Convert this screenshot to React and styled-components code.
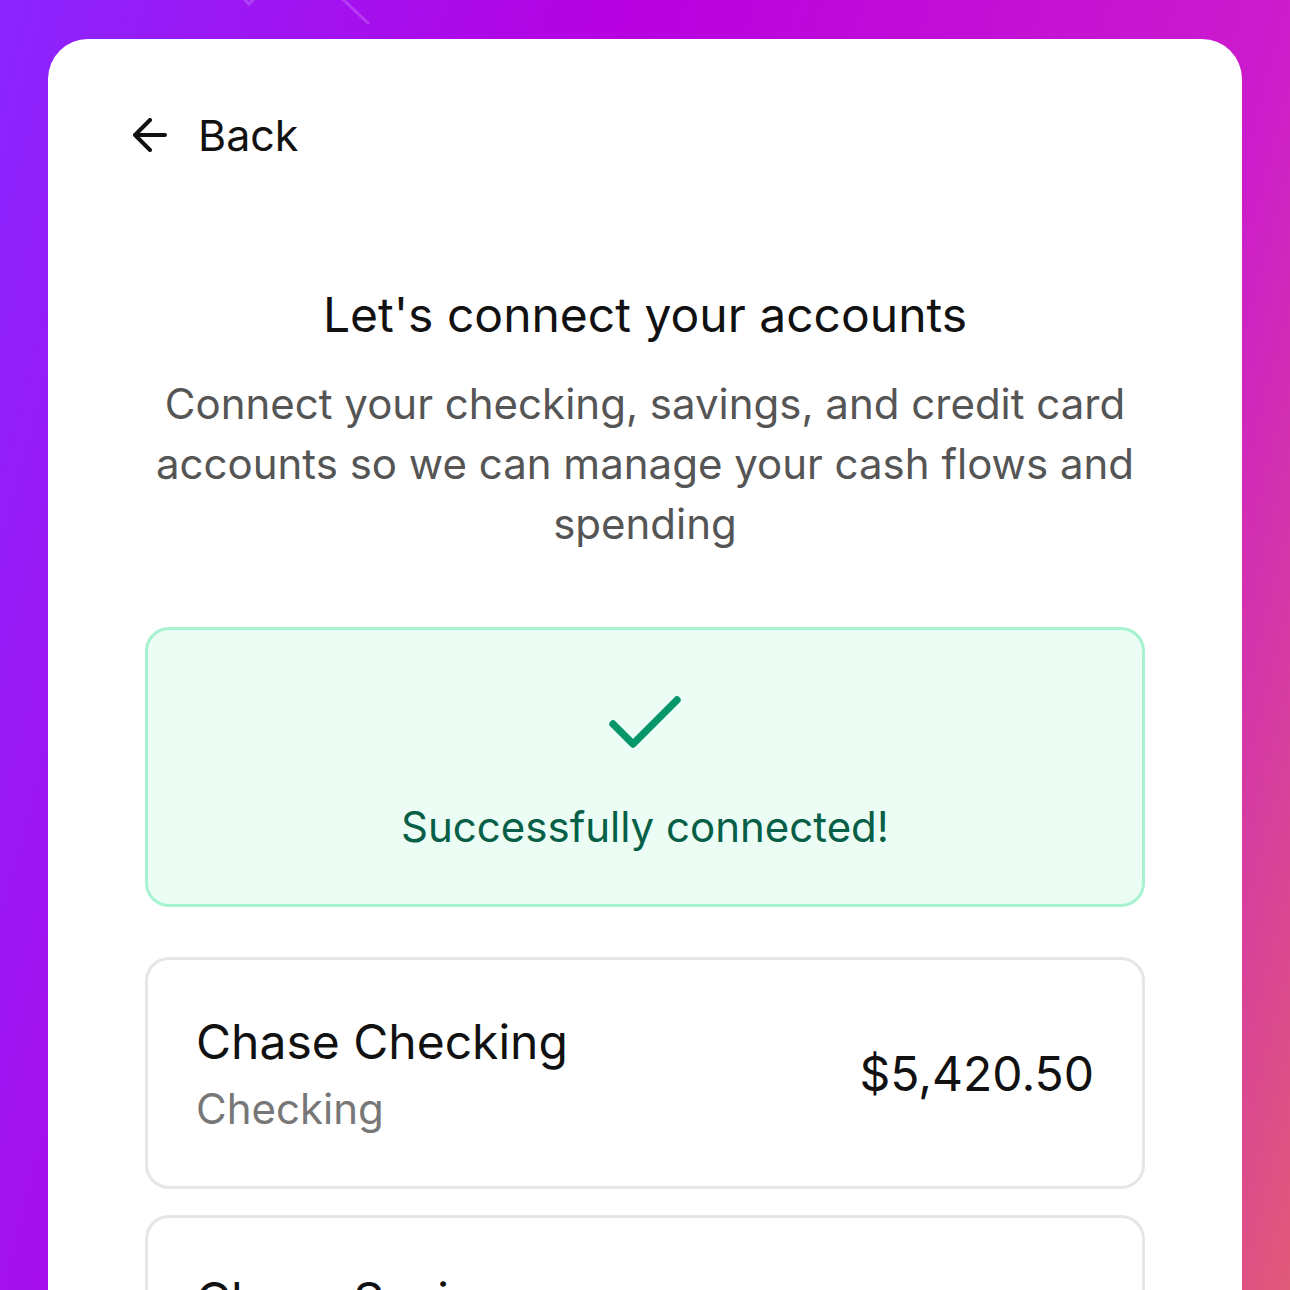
import React from "react";
import styled, { createGlobalStyle } from "styled-components";

const GlobalStyle = createGlobalStyle`
  html, body { margin: 0; padding: 0; }
  body {
    font-family: Inter, "Noto Sans", "Liberation Sans", sans-serif;
    -webkit-font-smoothing: antialiased;
  }
  * { box-sizing: border-box; }
`;

const Page = styled.div`
  position: relative;
  height: 1290px;
  overflow: hidden;
  padding: 39px 48px 0;
  background: linear-gradient(
    105deg,
    #8a25ff 0%,
    #b800e0 39%,
    #cc1ccc 79%,
    #e05a78 100%
  );
`;

const Decoration = styled.svg`
  position: absolute;
  top: 0;
  left: 0;
  pointer-events: none;
`;

const Card = styled.main`
  position: relative;
  background: #ffffff;
  border-radius: 40px 40px 0 0;
  min-height: 1300px;
  padding: 67px 97px 60px;
`;

const BackButton = styled.button`
  display: flex;
  align-items: center;
  gap: 31px;
  height: 58px;
  margin-left: -12px;
  padding: 0;
  border: none;
  background: none;
  font-family: inherit;
  font-size: 43px;
  color: #111111;
  cursor: pointer;
`;

const Header = styled.header`
  margin-top: 121px;
  text-align: center;
`;

const Title = styled.h1`
  margin: 0;
  font-size: 48px;
  line-height: 60px;
  font-weight: 400;
  color: #111111;
`;

const Subtitle = styled.p`
  margin: 29px 0 0;
  font-size: 42px;
  line-height: 60px;
  color: #555555;
`;

const SuccessBox = styled.section`
  margin-top: 73px;
  display: flex;
  flex-direction: column;
  align-items: center;
  gap: 25px;
  padding: 46px 24px 47px;
  background: #ecfdf5;
  border: 3px solid #a7f3d0;
  border-radius: 24px;
`;

const SuccessText = styled.p`
  margin: 0;
  font-size: 42px;
  line-height: 60px;
  color: #065f46;
`;

const AccountList = styled.div`
  margin-top: 50px;
  display: flex;
  flex-direction: column;
  gap: 26px;
`;

const AccountCard = styled.div`
  display: flex;
  align-items: center;
  justify-content: space-between;
  padding: 53px 48px 52px;
  border: 3px solid #e6e6e6;
  border-radius: 24px;
  background: #ffffff;
`;

const AccountInfo = styled.div`
  display: flex;
  flex-direction: column;
  gap: 13px;
`;

const AccountName = styled.div`
  font-size: 48px;
  line-height: 58px;
  color: #111111;
`;

const AccountType = styled.div`
  font-size: 42px;
  line-height: 50px;
  color: #777777;
`;

const Amount = styled.div`
  font-size: 48px;
  line-height: 58px;
  color: #111111;
`;

const ArrowLeftIcon = () => (
  <svg width="34" height="34" viewBox="0 0 34 34" fill="none">
    <path
      d="M32 17H2M17 2L2 17l15 15"
      stroke="#111111"
      strokeWidth="4"
      strokeLinecap="round"
      strokeLinejoin="round"
    />
  </svg>
);

const CheckIcon = () => (
  <svg width="96" height="96" viewBox="0 0 24 24" fill="none">
    <path
      d="M20 6 9 17l-5-5"
      stroke="#059669"
      strokeWidth="1.85"
      strokeLinecap="round"
      strokeLinejoin="round"
    />
  </svg>
);

const accounts = [
  { name: "Chase Checking", type: "Checking", amount: "$5,420.50" },
  { name: "Chase Savings", type: "Savings", amount: "$12,850.00" },
];

export default function App() {
  return (
    <>
      <GlobalStyle />
      <Page>
        <Decoration width="1290" height="60" viewBox="0 0 1290 60">
          <g stroke="rgba(255,255,255,0.18)" strokeWidth="3" strokeLinecap="round">
            <path d="M226 -20 L249 4 L272 -20" fill="none" />
            <path d="M318 -24 L368 23" />
          </g>
        </Decoration>
        <Card>
          <BackButton type="button">
            <ArrowLeftIcon />
            <span>Back</span>
          </BackButton>
          <Header>
            <Title>Let's connect your accounts</Title>
            <Subtitle>
              Connect your checking, savings, and credit card accounts so we can
              manage your cash flows and spending
            </Subtitle>
          </Header>
          <SuccessBox>
            <CheckIcon />
            <SuccessText>Successfully connected!</SuccessText>
          </SuccessBox>
          <AccountList>
            {accounts.map((a) => (
              <AccountCard key={a.name}>
                <AccountInfo>
                  <AccountName>{a.name}</AccountName>
                  <AccountType>{a.type}</AccountType>
                </AccountInfo>
                <Amount>{a.amount}</Amount>
              </AccountCard>
            ))}
          </AccountList>
        </Card>
      </Page>
    </>
  );
}
